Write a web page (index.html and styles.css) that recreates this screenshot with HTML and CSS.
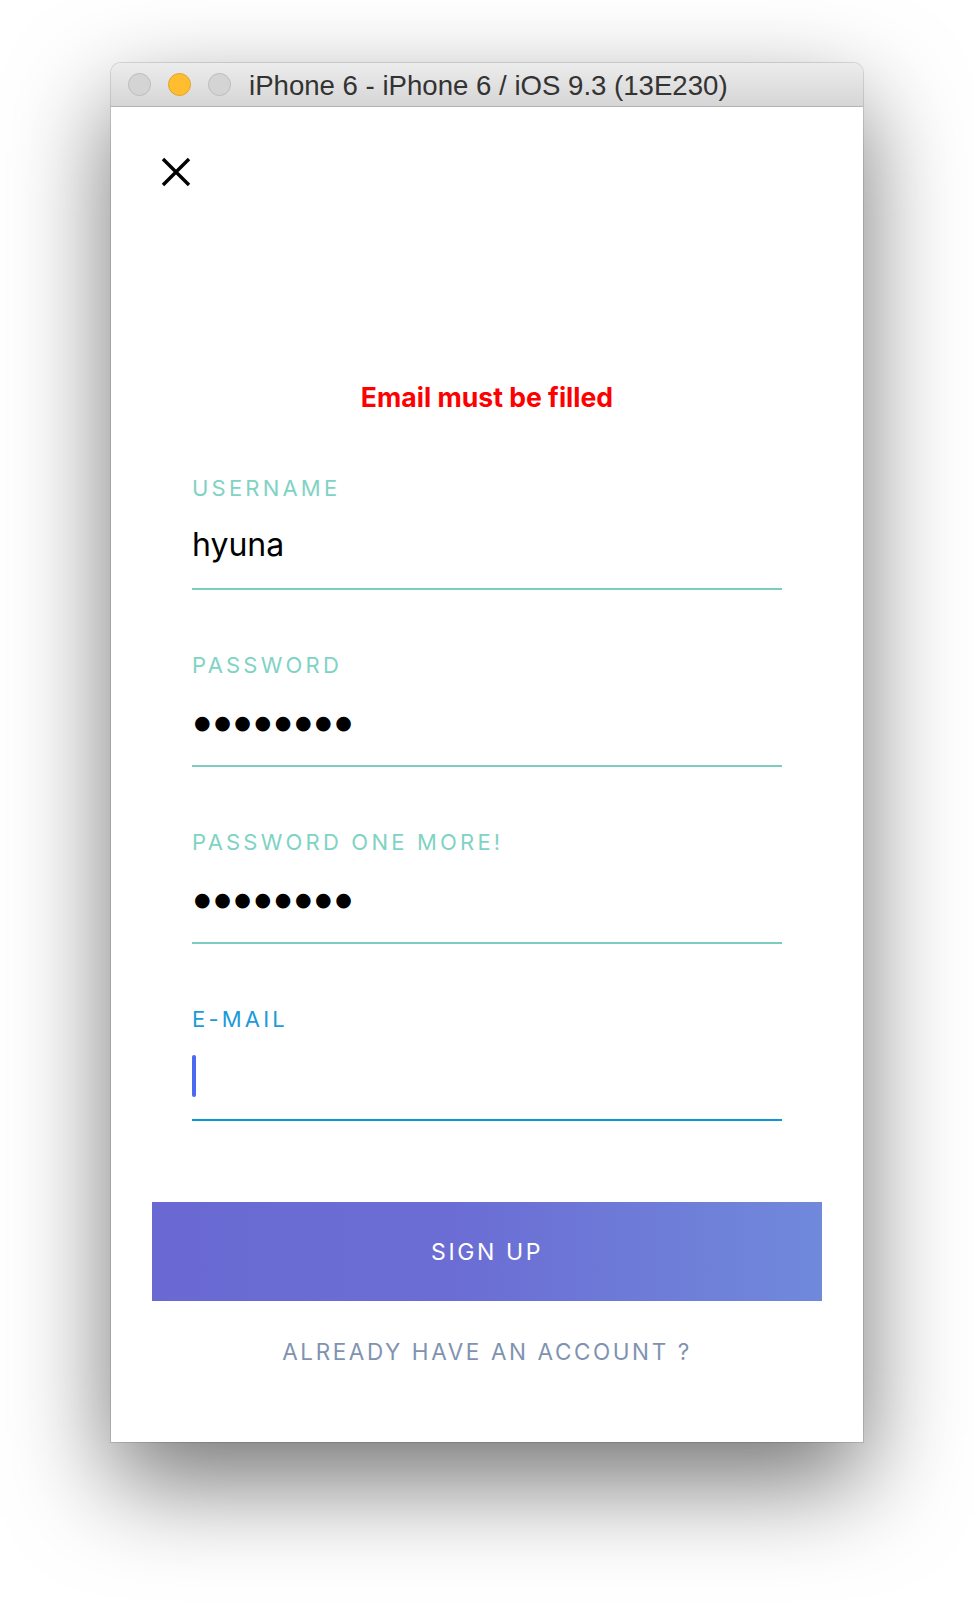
FILE: index.html
```html
<!DOCTYPE html>
<html lang="en">
  <head>
    <meta charset="UTF-8" />
    <meta name="viewport" content="width=device-width, initial-scale=1.0" />
    <title>Sign Up</title>
    <link rel="stylesheet" href="styles.css">
  </head>
  <body>
    <div class="window">
      <div class="titlebar">
        <div class="lights">
          <span class="light"></span>
          <span class="light light-yellow"></span>
          <span class="light"></span>
        </div>
        <div class="title">iPhone 6 - iPhone 6 / iOS 9.3 (13E230)</div>
      </div>

      <div class="screen">
        <button class="close" type="button" aria-label="Close">
          <svg width="30" height="30" viewBox="0 0 30 30">
            <path d="M2 2 L28 28 M28 2 L2 28" stroke="#000" stroke-width="3.4" fill="none" />
          </svg>
        </button>

        <p class="error">Email must be filled</p>

        <form class="signup-form" onsubmit="return false">
          <div class="form-group">
            <label>USERNAME</label>
            <div class="field-value">hyuna</div>
          </div>
          <div class="form-group">
            <label>PASSWORD</label>
            <div class="field-value dots">●●●●●●●●</div>
          </div>
          <div class="form-group">
            <label>PASSWORD ONE MORE!</label>
            <div class="field-value dots">●●●●●●●●</div>
          </div>
          <div class="form-group active">
            <label>E-MAIL</label>
            <div class="field-value"><span class="cursor"></span></div>
          </div>
          <button type="submit" class="btn">SIGN UP</button>
        </form>

        <p class="link">ALREADY HAVE AN ACCOUNT ?</p>
      </div>
    </div>
  </body>
</html>
```

FILE: styles.css
```css
body {
  margin: 0;
  background: #fff;
  font-family: Inter, "Noto Sans", sans-serif;
}

.window {
  width: 752px;
  margin: 63px 0 160px 111px;
  border-radius: 10px 10px 0 0;
  background: #fff;
  box-shadow: 0 0 0 1px rgba(0, 0, 0, 0.12), 0 40px 100px rgba(0, 0, 0, 0.55);
}

.titlebar {
  height: 43px;
  display: flex;
  align-items: center;
  padding-left: 17px;
  border-radius: 10px 10px 0 0;
  border-bottom: 1px solid #b4b4b4;
  background: linear-gradient(to bottom, #ececec, #d6d6d6);
}
.lights {
  display: flex;
  gap: 17px;
}
.light {
  width: 21px;
  height: 21px;
  border-radius: 50%;
  background: #d4d4d4;
  border: 1px solid #bcbcbc;
}
.light-yellow {
  background: #ffbd2f;
  border-color: #e1a32b;
}
.title {
  margin: 3px 0 0 18px;
  font-family: "Liberation Sans", Arial, sans-serif;
  font-size: 27.6px;
  color: #333;
}

.screen {
  height: 1335px;
  padding-top: 50px;
  box-sizing: border-box;
}

.close {
  display: block;
  margin: 0 0 0 50px;
  padding: 0;
  width: 30px;
  height: 30px;
  border: none;
  background: none;
}
.close svg {
  display: block;
}

.error {
  margin: 193px 0 0;
  text-align: center;
  color: #ff0000;
  font-size: 26.6px;
  font-weight: bold;
  line-height: 34px;
}

.signup-form {
  margin-top: 60px;
  padding: 0 41px;
}
.form-group {
  margin: 0 40px 61px;
  border-bottom: 2px solid #7ccdc0;
}
.form-group label {
  display: block;
  font-size: 22px;
  line-height: 28px;
  letter-spacing: 3.2px;
  color: #80d3c4;
}
.field-value {
  height: 44px;
  margin-top: 21px;
  margin-bottom: 21px;
  font-size: 32px;
  line-height: 44px;
  color: #000;
}
.dots {
  font-family: "DejaVu Sans", sans-serif;
  font-size: 19px;
  letter-spacing: 3.6px;
  padding-left: 2px;
}
.form-group.active {
  border-bottom-color: #0b96d6;
  margin-bottom: 81px;
}
.form-group.active label {
  color: #1d9ad8;
}
.cursor {
  display: inline-block;
  width: 4px;
  height: 42px;
  margin-top: 1px;
  border-radius: 2px;
  background: #4a6af0;
  vertical-align: top;
}

.btn {
  display: block;
  width: 100%;
  height: 99px;
  padding-top: 2px;
  border: none;
  background: linear-gradient(to right, #6a69d3 0%, #6b6dd4 45%, #7089db 100%);
  color: #fff;
  font-family: Inter, "Noto Sans", sans-serif;
  font-size: 23px;
  letter-spacing: 2.6px;
}

.link {
  margin: 36px 0 0;
  text-align: center;
  font-size: 22.5px;
  line-height: 30px;
  letter-spacing: 2.6px;
  color: #7f93b0;
}
```
